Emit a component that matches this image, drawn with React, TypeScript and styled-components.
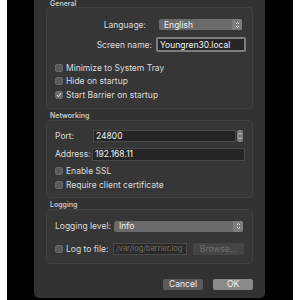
import React from 'react';
import styled, { createGlobalStyle } from 'styled-components';

const GlobalStyle = createGlobalStyle`
  html, body {
    margin: 0;
    padding: 0;
    background: #ffffff;
    font-family: Inter, "Liberation Sans", Arial, sans-serif;
  }
`;

const Screen = styled.div`
  margin: 0 7px;
  height: 300px;
  background: #000;
  padding: 0 28px 2px 27px;
  box-sizing: border-box;
  display: flex;
  overflow: hidden;
`;

const Window = styled.div`
  flex: 1;
  background: #323232;
  border-radius: 0 0 5px 5px;
  padding: 0 12px 11px 12px;
  display: flex;
  flex-direction: column;
  overflow: hidden;
`;

const Section = styled.div<{ $first?: boolean }>`
  display: flex;
  flex-direction: column;
  margin-top: ${(p) => (p.$first ? '0' : '1px')};
`;

const Title = styled.div<{ $first?: boolean }>`
  height: ${(p) => (p.$first ? 7 : 10)}px;
  line-height: ${(p) => (p.$first ? 7 : 11)}px;
  font-size: 7px;
  font-weight: 600;
  color: #c8c8c8;
  padding-left: 4px;
`;

const Box = styled.div<{ $pt: number; $pb: number }>`
  background: #363636;
  border: 1px solid #414141;
  border-radius: 4px;
  padding: ${(p) => p.$pt}px 0 ${(p) => p.$pb}px 8px;
  display: flex;
  flex-direction: column;
`;

const FormRow = styled.div<{ $mt?: number }>`
  display: flex;
  align-items: center;
  margin-top: ${(p) => p.$mt ?? 0}px;
`;

const Label = styled.div<{ $w?: number; $right?: boolean }>`
  width: ${(p) => (p.$w ? `${p.$w}px` : 'auto')};
  flex-shrink: 0;
  text-align: ${(p) => (p.$right ? 'right' : 'left')};
  font-size: 8.5px;
  color: #dcdcdc;
  white-space: nowrap;
`;

const Select = styled.div<{ $ml: number; $w: number }>`
  margin-left: ${(p) => p.$ml}px;
  width: ${(p) => p.$w}px;
  height: 11px;
  background: #6a6a6a;
  border-radius: 2px;
  display: flex;
  align-items: center;
  font-size: 8.5px;
  color: #f0f0f0;
  box-sizing: border-box;
  padding-left: 5px;
`;

const SelectText = styled.span`
  flex: 1;
`;

const Arrows = styled.div`
  width: 10px;
  height: 100%;
  background: #7c7c7c;
  border-radius: 0 2px 2px 0;
  display: flex;
  align-items: center;
  justify-content: center;
`;

const Input = styled.div<{ $ml: number; $w: number; $h: number; $focus?: boolean; $disabled?: boolean }>`
  margin-left: ${(p) => p.$ml}px;
  width: ${(p) => p.$w}px;
  height: ${(p) => p.$h}px;
  box-sizing: border-box;
  background: ${(p) => (p.$disabled ? '#2a2a2a' : '#252525')};
  border: ${(p) => (p.$focus ? '2px solid #7e7e7e' : '1px solid #4a4a4a')};
  border-radius: ${(p) => (p.$focus ? '2px' : '0')};
  display: flex;
  align-items: center;
  padding-left: 2px;
  font-size: ${(p) => (p.$disabled ? '7.5px' : '8.5px')};
  color: ${(p) => (p.$disabled ? '#6e6e6e' : '#f2f2f2')};
  white-space: nowrap;
  overflow: hidden;
`;

const Stepper = styled.div`
  margin-left: 1px;
  width: 6px;
  height: 12px;
  background: #7a7a7a;
  border-radius: 2px;
  display: flex;
  flex-direction: column;
  align-items: center;
  justify-content: space-evenly;
`;

const CheckRow = styled.div`
  display: flex;
  align-items: center;
  height: 13.5px;
`;

const Check = styled.div<{ $checked?: boolean }>`
  width: 8px;
  height: 8px;
  box-sizing: border-box;
  border-radius: 2px;
  background: ${(p) => (p.$checked ? '#6e6e6e' : '#5a5a5a')};
  border: 1px solid #686868;
  margin-right: 3px;
  display: flex;
  align-items: center;
  justify-content: center;
  flex-shrink: 0;
`;

const CheckText = styled.span`
  font-size: 8.5px;
  color: #dcdcdc;
  white-space: nowrap;
`;

const SmallButton = styled.div`
  margin-left: 6px;
  width: 51px;
  height: 12px;
  background: #454545;
  border-radius: 2px;
  display: flex;
  align-items: center;
  justify-content: center;
  font-size: 8.5px;
  color: #6f6f6f;
`;

const Buttons = styled.div`
  display: flex;
  justify-content: flex-end;
  gap: 10px;
  margin-top: 15px;
`;

const Button = styled.div<{ $primary?: boolean }>`
  width: 40px;
  height: 11px;
  border-radius: 2px;
  background: ${(p) => (p.$primary ? '#8a8a8a' : '#5c5c5c')};
  display: flex;
  align-items: center;
  justify-content: center;
  font-size: 8.5px;
  color: #f4f4f4;
`;

const UpDown = () => (
  <svg width="5" height="8" viewBox="0 0 5 8">
    <path d="M1 3 L2.5 1.5 L4 3 M1 5 L2.5 6.5 L4 5" stroke="#e8e8e8" strokeWidth="0.9" fill="none" />
  </svg>
);

const Tick = () => (
  <svg width="6" height="6" viewBox="0 0 6 6">
    <path d="M1 3.2 L2.4 4.6 L5 1.2" stroke="#f0f0f0" strokeWidth="1" fill="none" />
  </svg>
);

const Caret = ({ up }: { up?: boolean }) => (
  <svg width="4" height="3" viewBox="0 0 4 3">
    <path d={up ? 'M0.5 2.5 L2 1 L3.5 2.5' : 'M0.5 0.5 L2 2 L3.5 0.5'} stroke="#e0e0e0" strokeWidth="0.8" fill="none" />
  </svg>
);

export default function App() {
  return (
    <>
      <GlobalStyle />
      <Screen>
        <Window>
          <Section $first>
            <Title $first>General</Title>
            <Box $pt={11} $pb={6}>
              <FormRow>
                <Label $w={91} $right>Language:</Label>
                <Select $ml={13} $w={83}>
                  <SelectText>English</SelectText>
                  <Arrows><UpDown /></Arrows>
                </Select>
              </FormRow>
              <FormRow $mt={7}>
                <Label $w={97} $right>Screen name:</Label>
                <Input $ml={4} $w={90} $h={15} $focus>Youngren30.local</Input>
              </FormRow>
              <FormRow $mt={9}>
                <div>
                  <CheckRow><Check /><CheckText>Minimize to System Tray</CheckText></CheckRow>
                  <CheckRow><Check /><CheckText>Hide on startup</CheckText></CheckRow>
                  <CheckRow><Check $checked><Tick /></Check><CheckText>Start Barrier on startup</CheckText></CheckRow>
                </div>
              </FormRow>
            </Box>
          </Section>

          <Section>
            <Title>Networking</Title>
            <Box $pt={9} $pb={5}>
              <FormRow>
                <Label $w={38}>Port:</Label>
                <Input $ml={0} $w={143} $h={12}>24800</Input>
                <Stepper><Caret up /><Caret /></Stepper>
              </FormRow>
              <FormRow $mt={6}>
                <Label $w={37}>Address:</Label>
                <Input $ml={0} $w={153} $h={13}>192.168.11</Input>
              </FormRow>
              <FormRow $mt={4}>
                <div>
                  <CheckRow><Check /><CheckText>Enable SSL</CheckText></CheckRow>
                  <CheckRow><Check /><CheckText>Require client certificate</CheckText></CheckRow>
                </div>
              </FormRow>
            </Box>
          </Section>

          <Section>
            <Title>Logging</Title>
            <Box $pt={11} $pb={8}>
              <FormRow>
                <Label $w={59}>Logging level:</Label>
                <Select $ml={0} $w={129}>
                  <SelectText>Info</SelectText>
                  <Arrows><UpDown /></Arrows>
                </Select>
              </FormRow>
              <FormRow $mt={11}>
                <Check />
                <Label $w={47}>Log to file:</Label>
                <Input $ml={0} $w={74} $h={12} $disabled>/var/log/barrier.log</Input>
                <SmallButton>Browse...</SmallButton>
              </FormRow>
            </Box>
          </Section>

          <Buttons>
            <Button>Cancel</Button>
            <Button $primary>OK</Button>
          </Buttons>
        </Window>
      </Screen>
    </>
  );
}
